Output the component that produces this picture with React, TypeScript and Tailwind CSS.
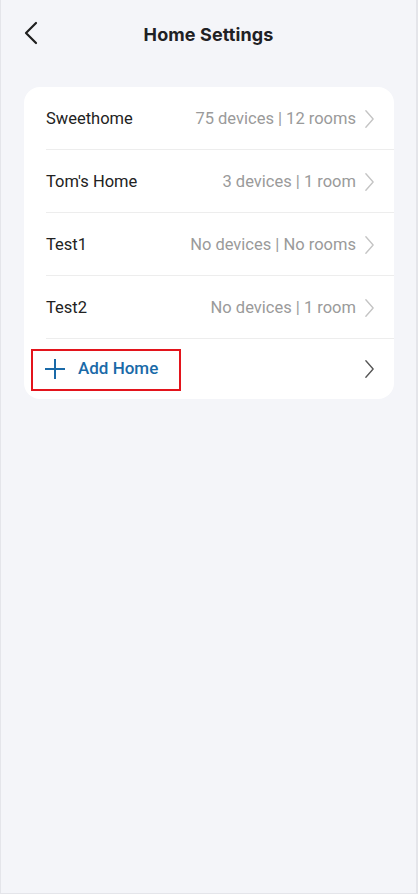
interface HomeItem {
  name: string;
  summary: string;
}

const homes: HomeItem[] = [
  { name: "Sweethome", summary: "75 devices | 12 rooms" },
  { name: "Tom's Home", summary: "3 devices | 1 room" },
  { name: "Test1", summary: "No devices | No rooms" },
  { name: "Test2", summary: "No devices | 1 room" },
];

function Chevron({ className }: { className?: string }) {
  return (
    <svg viewBox="0 0 12 22" className={className} fill="none" stroke="currentColor" strokeWidth={1.5} strokeLinecap="round" strokeLinejoin="round">
      <path d="M2 2 L10 11 L2 20" />
    </svg>
  );
}

export default function App() {
  return (
    <div
      className="h-[894px] w-[418px] bg-[#f4f5f9] border-l border-r-2 border-b border-[#e4e5ea] overflow-hidden"
      style={{ fontFamily: "Roboto, 'Noto Sans', sans-serif" }}
    >
      <header className="relative flex h-[68px] items-center justify-center">
        <button className="absolute left-[23px] top-[21px] text-[#1f1f1f]">
          <svg viewBox="0 0 14 24" className="h-[24px] w-[14px]" fill="none" stroke="currentColor" strokeWidth={2.2} strokeLinecap="round" strokeLinejoin="round">
            <path d="M12 2 L2 12 L12 22" />
          </svg>
        </button>
        <h1
          className="text-[18px] font-bold text-[#1f2124] tracking-[0.1px]"
          style={{ fontFamily: "Inter, 'Open Sans', sans-serif" }}
        >
          Home Settings
        </h1>
      </header>

      <div className="ml-[23px] mr-[22px] mt-[19px] overflow-hidden rounded-[16px] bg-white">
        {homes.map((home) => (
          <div key={home.name} className="ml-[22px] flex h-[63px] items-center border-b border-[#ededed] pr-[19px] pt-[2px]">
            <span className="flex-1 text-[16.5px] text-[#222]">{home.name}</span>
            <span className="text-[16.5px] text-[#9a9a9a]">{home.summary}</span>
            <Chevron className="ml-[8px] h-[20px] w-[11px] text-[#c4c4c4]" />
          </div>
        ))}
        <div className="relative flex h-[60px] items-center pl-[21px] pr-[19px]">
          <div className="absolute left-[7px] top-[10px] h-[42px] w-[150px] border-2 border-[#e3141c]" />
          <svg viewBox="0 0 20 20" className="h-[20px] w-[20px] text-[#1a6aa8]" fill="none" stroke="currentColor" strokeWidth={2}>
            <path d="M10 0 V20 M0 10 H20" />
          </svg>
          <span className="ml-[13px] flex-1 text-[17px] font-medium text-[#1a6aa8]">Add Home</span>
          <Chevron className="h-[20px] w-[11px] text-[#555]" />
        </div>
      </div>
    </div>
  );
}
